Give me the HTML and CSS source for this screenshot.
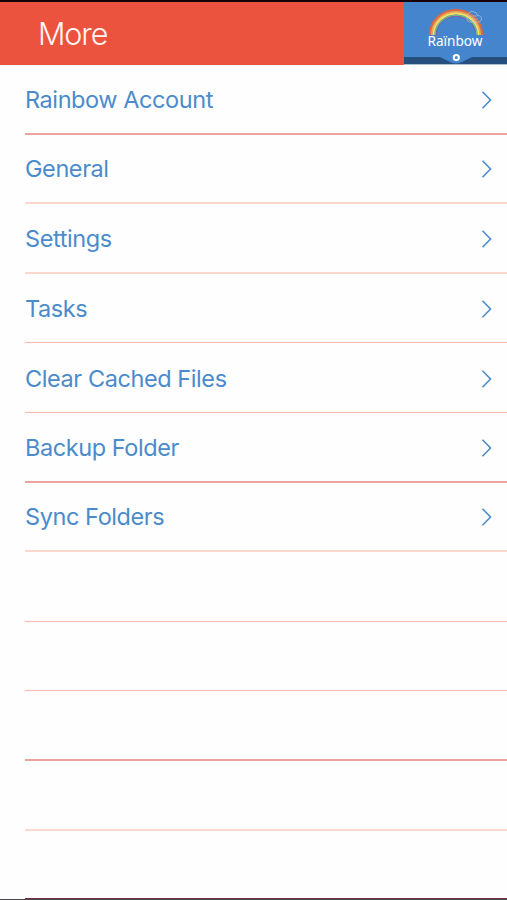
FILE: index.html
```html
<!DOCTYPE html>
<html lang="en">
<head>
<meta charset="utf-8">
<title>More</title>
<link rel="stylesheet" href="styles.css">
</head>
<body>
<div class="screen">
  <header class="header">
    <h1 class="title">More</h1>
    <svg class="logo" viewBox="0 0 103 63" role="img" aria-label="Rainbow">
      <rect width="103" height="63" fill="#4585ce"/>
      <path d="M0 55h103v7H0z" fill="#254f7d"/>
      <path d="M36 55l11 5.5q5 2 10 0l11-5.500z" fill="#4585ce"/>
      <path d="M0 62.5h103" stroke="#a9c0d7"/>
      <g fill="none">
        <path d="M26 33a26 25 0 0 1 52 0" stroke="#e3663f" stroke-width="2.2"/>
        <path d="M27.800 33a24.200 23.200 0 0 1 48.400 0" stroke="#f3a54b" stroke-width="1.800"/>
        <path d="M29.500 33a22.500 21.500 0 0 1 45 0" stroke="#f5e062" stroke-width="1.900"/>
        <path d="M31.200 33a20.800 19.800 0 0 1 41.600 0" stroke="#75b788" stroke-width="1.500"/>
        <path d="M32.400 33a19.600 18.600 0 0 1 39.200 0" stroke="#8060a5" stroke-width="1"/>
        <path d="M64 14q0-4.500 4.500-4.500 4.500 0 5 4 4.500 0 4 4-1 3-4 2.500h-6q-4.500 0-4.500-3 0-3 4.500-3h5m-5 3h6" stroke="#a9cdeb" stroke-width="1" opacity=".65"/>
      </g>
      <text class="logo-text" x="23.5" y="43.7" textLength="55" lengthAdjust="spacingAndGlyphs">Raïnbow</text>
      <circle cx="52.3" cy="55.5" r="2.6" fill="none" stroke="#fff" stroke-width="2"/>
    </svg>
  </header>
  <main class="list">
    <a class="row strong"><span class="label">Rainbow Account</span><svg class="chevron" viewBox="0 0 12 20"><path d="M1.5 1.8 9.5 10l-8 8.2"/></svg></a>
    <a class="row soft"><span class="label">General</span><svg class="chevron" viewBox="0 0 12 20"><path d="M1.5 1.8 9.5 10l-8 8.2"/></svg></a>
    <a class="row soft"><span class="label">Settings</span><svg class="chevron" viewBox="0 0 12 20"><path d="M1.5 1.8 9.5 10l-8 8.2"/></svg></a>
    <a class="row"><span class="label">Tasks</span><svg class="chevron" viewBox="0 0 12 20"><path d="M1.5 1.8 9.5 10l-8 8.2"/></svg></a>
    <a class="row"><span class="label">Clear Cached Files</span><svg class="chevron" viewBox="0 0 12 20"><path d="M1.5 1.8 9.5 10l-8 8.2"/></svg></a>
    <a class="row strong"><span class="label">Backup Folder</span><svg class="chevron" viewBox="0 0 12 20"><path d="M1.5 1.8 9.5 10l-8 8.2"/></svg></a>
    <a class="row soft"><span class="label">Sync Folders</span><svg class="chevron" viewBox="0 0 12 20"><path d="M1.5 1.8 9.5 10l-8 8.2"/></svg></a>
    <div class="row"></div>
    <div class="row"></div>
    <div class="row strong"></div>
    <div class="row soft"></div>
    <div class="row last"></div>
  </main>
</div>
</body>
</html>
```
FILE: styles.css
```css
* { box-sizing: border-box; }
body { margin: 0; background: #fefefe; font-family: Inter, "Liberation Sans", sans-serif; }
.screen { height: 900px; overflow: hidden; border-bottom: 1px solid #4b4448; }
.header { height: 65px; display: flex; align-items: flex-start; justify-content: space-between; background: #eb533f; border-top: 2px solid #170307; }
.title { margin: 0; padding: 12px 0 0 38px; font-size: 30.5px; line-height: 40px; font-weight: 350; letter-spacing: -1.1px; color: #fff5f2; }
.logo { display: block; width: 103px; height: 63px; flex: none; }
.logo-text { font: 400 14px "Noto Sans", sans-serif; fill: #fff; }
.list { display: grid; grid-auto-rows: 69.6px; padding-left: 25px; }
.row { display: flex; align-items: center; justify-content: space-between; padding: 2px 14.5px 0 0; border-bottom: 1px solid #f5b9ab; color: #4b8bcc; }
.soft { border-bottom: 2px solid #fad8cf; }
.strong { border-bottom: 2px solid #eba5a0; }
.last { border-bottom: 2px solid #74303e; }
.label { font-size: 23.5px; line-height: 30px; letter-spacing: -0.42px; }
.chevron { width: 12px; height: 20px; fill: none; stroke: #4b8bcc; stroke-width: 1.6; }
```
